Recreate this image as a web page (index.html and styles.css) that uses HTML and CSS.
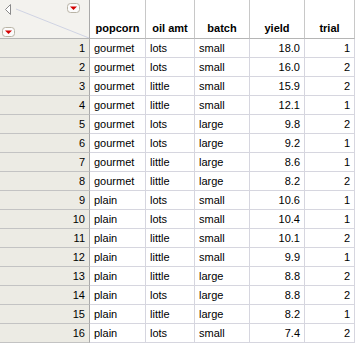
FILE: index.html
```html
<!DOCTYPE html>
<html lang="en">
<head>
    <meta charset="UTF-8">
    <title>Popcorn</title>
    <link rel="stylesheet" href="styles.css">
</head>
<body>

    <div class="grid">

        <!-- Column headers -->
        <div class="row head">
            <div class="cell corner">
                <svg class="corner-art" width="89" height="38" viewBox="0 0 89 38">
                    <line x1="16" y1="9" x2="89" y2="38" stroke="#cfd3e3" stroke-width="1"/>
                    <path d="M10.5 4.5 L5.5 9.5 L10.5 14.5 Z" fill="#fff" stroke="#8a8a8a"/>
                    <rect x="67.5" y="3.5" width="12" height="9" rx="3" fill="#fbfbfb" stroke="#b9b4a6"/>
                    <path d="M70 6.5 L77 6.5 L73.5 10 Z" fill="#d40000"/>
                    <rect x="2.5" y="27.5" width="12" height="9" rx="3" fill="#fbfbfb" stroke="#b9b4a6"/>
                    <path d="M5 30.5 L12 30.5 L8.5 34 Z" fill="#d40000"/>
                </svg>
            </div>
            <div class="cell c-pop">popcorn</div>
            <div class="cell c-oil">oil amt</div>
            <div class="cell c-batch">batch</div>
            <div class="cell c-yield">yield</div>
            <div class="cell c-trial">trial</div>
        </div>

        <div class="row"><div class="cell num">1</div><div class="cell c-pop">gourmet</div><div class="cell c-oil">lots</div><div class="cell c-batch">small</div><div class="cell c-yield">18.0</div><div class="cell c-trial">1</div></div>
        <div class="row"><div class="cell num">2</div><div class="cell c-pop">gourmet</div><div class="cell c-oil">lots</div><div class="cell c-batch">small</div><div class="cell c-yield">16.0</div><div class="cell c-trial">2</div></div>
        <div class="row"><div class="cell num">3</div><div class="cell c-pop">gourmet</div><div class="cell c-oil">little</div><div class="cell c-batch">small</div><div class="cell c-yield">15.9</div><div class="cell c-trial">2</div></div>
        <div class="row"><div class="cell num">4</div><div class="cell c-pop">gourmet</div><div class="cell c-oil">little</div><div class="cell c-batch">small</div><div class="cell c-yield">12.1</div><div class="cell c-trial">1</div></div>
        <div class="row"><div class="cell num">5</div><div class="cell c-pop">gourmet</div><div class="cell c-oil">lots</div><div class="cell c-batch">large</div><div class="cell c-yield">9.8</div><div class="cell c-trial">2</div></div>
        <div class="row"><div class="cell num">6</div><div class="cell c-pop">gourmet</div><div class="cell c-oil">lots</div><div class="cell c-batch">large</div><div class="cell c-yield">9.2</div><div class="cell c-trial">1</div></div>
        <div class="row"><div class="cell num">7</div><div class="cell c-pop">gourmet</div><div class="cell c-oil">little</div><div class="cell c-batch">large</div><div class="cell c-yield">8.6</div><div class="cell c-trial">1</div></div>
        <div class="row"><div class="cell num">8</div><div class="cell c-pop">gourmet</div><div class="cell c-oil">little</div><div class="cell c-batch">large</div><div class="cell c-yield">8.2</div><div class="cell c-trial">2</div></div>
        <div class="row"><div class="cell num">9</div><div class="cell c-pop">plain</div><div class="cell c-oil">lots</div><div class="cell c-batch">small</div><div class="cell c-yield">10.6</div><div class="cell c-trial">1</div></div>
        <div class="row"><div class="cell num">10</div><div class="cell c-pop">plain</div><div class="cell c-oil">lots</div><div class="cell c-batch">small</div><div class="cell c-yield">10.4</div><div class="cell c-trial">1</div></div>
        <div class="row"><div class="cell num">11</div><div class="cell c-pop">plain</div><div class="cell c-oil">little</div><div class="cell c-batch">small</div><div class="cell c-yield">10.1</div><div class="cell c-trial">2</div></div>
        <div class="row"><div class="cell num">12</div><div class="cell c-pop">plain</div><div class="cell c-oil">little</div><div class="cell c-batch">small</div><div class="cell c-yield">9.9</div><div class="cell c-trial">1</div></div>
        <div class="row"><div class="cell num">13</div><div class="cell c-pop">plain</div><div class="cell c-oil">little</div><div class="cell c-batch">large</div><div class="cell c-yield">8.8</div><div class="cell c-trial">2</div></div>
        <div class="row"><div class="cell num">14</div><div class="cell c-pop">plain</div><div class="cell c-oil">lots</div><div class="cell c-batch">large</div><div class="cell c-yield">8.8</div><div class="cell c-trial">2</div></div>
        <div class="row"><div class="cell num">15</div><div class="cell c-pop">plain</div><div class="cell c-oil">little</div><div class="cell c-batch">large</div><div class="cell c-yield">8.2</div><div class="cell c-trial">1</div></div>
        <div class="row"><div class="cell num">16</div><div class="cell c-pop">plain</div><div class="cell c-oil">lots</div><div class="cell c-batch">small</div><div class="cell c-yield">7.4</div><div class="cell c-trial">2</div></div>

    </div>

</body>
</html>
```

FILE: styles.css
```css
* {
    margin: 0;
    padding: 0;
    box-sizing: border-box;
}

body {
    font-family: 'Liberation Sans', Arial, sans-serif;
    font-size: 11px;
    color: #000;
    background-color: #fff;
    width: 362px;
    height: 344px;
    overflow: hidden;
}

.row {
    display: flex;
    height: 19px;
}

.cell {
    height: 100%;
    border-right: 1px solid #d6d6df;
    border-bottom: 1px solid #d6d6df;
    padding: 0 4px;
    line-height: 18px;
    white-space: nowrap;
    overflow: hidden;
}

/* column widths, border included */
.num, .corner { width: 90px; }
.c-pop { width: 56px; }
.c-oil { width: 49px; }
.c-batch { width: 55px; }
.c-yield { width: 55px; text-align: right; }
.c-trial { width: 50px; text-align: right; }

.num {
    text-align: right;
    background-color: #ecebe4;
    border-right-color: #a9a9a9;
    border-bottom-color: #c3c3c3;
}

/* Header */
.head {
    height: 39px;
}

.head .cell {
    font-weight: bold;
    text-align: center;
    line-height: 14px;
    padding: 21px 0 0;
    border-right-color: #c8c8c8;
    border-bottom-color: #b5b5b5;
}

.head .corner {
    position: relative;
    padding: 0;
    background-color: #f3f2ee;
    border-right-color: #a9a9a9;
}

.corner-art {
    position: absolute;
    top: 0;
    left: 0;
}
```
